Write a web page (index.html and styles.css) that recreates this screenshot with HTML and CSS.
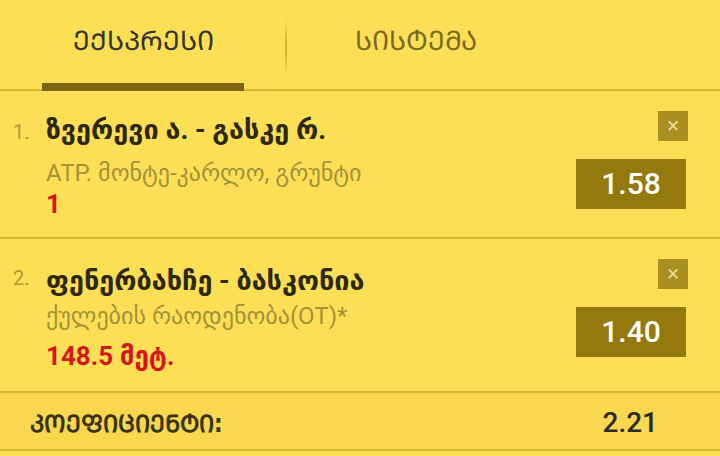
FILE: index.html
```html
<!doctype html>
<html>
<head>
<meta charset="utf-8">
<title>კუპონი</title>
<link rel="stylesheet" href="styles.css">
</head>
<body>
<div class="slip">
  <div class="tabs">
    <div class="tab active">ᲔᲥᲡᲞᲠᲔᲡᲘ</div>
    <div class="tab">ᲡᲘᲡᲢᲔᲛᲐ</div>
  </div>
  <div class="bet">
    <div class="num">1.</div>
    <div class="info">
      <div class="title">ზვერევი ა. - გასკე რ.</div>
      <div class="market">ATP. მონტე-კარლო, გრუნტი</div>
      <div class="pick">1</div>
    </div>
    <div class="side">
      <span class="close">×</span>
      <span class="odd">1.58</span>
    </div>
  </div>
  <div class="bet bet-line">
    <div class="num">2.</div>
    <div class="info">
      <div class="title">ფენერბახჩე - ბასკონია</div>
      <div class="market">ქულების რაოდენობა(OT)*</div>
      <div class="pick">148.5 მეტ.</div>
    </div>
    <div class="side">
      <span class="close">×</span>
      <span class="odd">1.40</span>
    </div>
  </div>
  <div class="total">
    <span class="total-label">ᲙᲝᲔᲤᲘᲪᲘᲔᲜᲢᲘ:</span>
    <span class="total-value">2.21</span>
  </div>
</div>
</body>
</html>
```

FILE: styles.css
```css
body {
	margin: 0;
	background-color: #fddf55;
	font-family: Roboto, "DejaVu Sans", sans-serif;
}
.slip {
	width: 720px;
}
/* ---------- tabs ------------- */
.tabs {
	display: flex;
	height: 89px;
	border-bottom: 2px solid #d6b530;
}
.tab {
	position: relative;
	display: flex;
	align-items: center;
	justify-content: center;
	padding-bottom: 10px;
	font-size: 27px;
	color: #7a6a22;
}
.tab:first-child {width: 287px;}
.tab:last-child {width: 258px;}
.tab.active {color: #333;}
.tab.active:after {
	content: "";
	position: absolute;
	left: 42px;
	right: 43px;
	bottom: -2px;
	height: 8px;
	background-color: #7a6514;
}
.tab:first-child:before {
	content: "";
	position: absolute;
	right: 0;
	top: 18px;
	bottom: 12px;
	width: 2px;
	background: linear-gradient(rgba(214, 181, 48, 0), #d6b530 40%, #d6b530 60%, rgba(214, 181, 48, 0));
}
/* ---------- bets ------------- */
.bet {
	display: flex;
	padding: 20px 32px 0 13px;
	height: 126px;
	border-bottom: 2px solid #d6b530;
}
.bet-line {height: 132px;}
.num {
	width: 33px;
	padding-top: 9px;
	font-size: 20px;
	color: #b09a35;
}
.info {flex: 1;}
.title {
	padding-top: 2px;
	font-size: 27px;
	font-weight: bold;
	color: #2d2810;
	line-height: 34px;
}
.market {
	margin-top: 10px;
	font-size: 24px;
	color: #a3923a;
	line-height: 32px;
}
.pick {
	margin-top: -1px;
	font-size: 26px;
	font-weight: bold;
	color: #d4161b;
	line-height: 32px;
}
.bet-line .num {padding-top: 7px;}
.bet-line .title {padding-top: 5px;}
.bet-line .market {margin-top: 2px;}
.bet-line .pick {margin-top: 8px;}
.side {
	display: flex;
	flex-direction: column;
	align-items: flex-end;
	gap: 18px;
}
.close {
	width: 30px;
	height: 30px;
	background-color: #a98f1f;
	color: #e8dc9c;
	font-size: 22px;
	line-height: 30px;
	text-align: center;
}
.odd {
	width: 110px;
	height: 50px;
	margin-right: 2px;
	background-color: #94790e;
	color: white;
	font-size: 30px;
	font-weight: 500;
	line-height: 50px;
	text-align: center;
}
/* ---------- total ------------- */
.total {
	display: flex;
	justify-content: space-between;
	align-items: center;
	height: 58px;
	padding: 2px 62px 0 30px;
	box-sizing: border-box;
	background-color: #f9d84f;
	border-bottom: 2px solid #d6b530;
	color: #2a2a2a;
}
.total-label {
	font-family: "DejaVu Sans Condensed", "DejaVu Sans", sans-serif;
	font-size: 24px;
	font-weight: bold;
	color: #3a3412;
}
.total-value {
	font-size: 28px;
	font-weight: 500;
}
```
